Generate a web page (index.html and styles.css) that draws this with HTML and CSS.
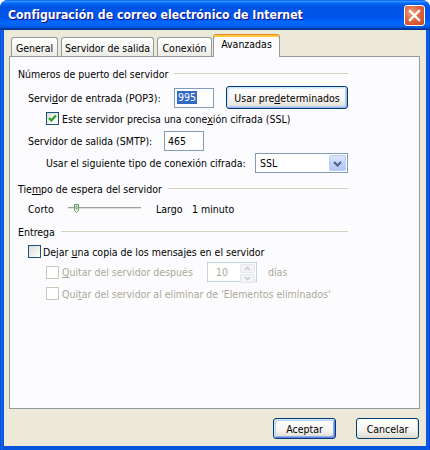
FILE: index.html
```html
<!DOCTYPE html>
<html lang="es">
<head>
<meta charset="utf-8">
<title>Configuración de correo electrónico de Internet</title>
<link rel="stylesheet" href="styles.css">
</head>
<body>
<div class="window">
  <div class="titlebar">
    <span class="title">Configuración de correo electrónico de Internet</span>
    <span class="close"><svg width="21" height="21" viewBox="0 0 21 21"><path d="M6 6 L15 15 M15 6 L6 15" stroke="#fff" stroke-width="2.4" stroke-linecap="square"/></svg></span>
  </div>
  <div class="client">
    <div class="tabs">
      <div class="tab t-general">General</div>
      <div class="tab t-salida">Servidor de salida</div>
      <div class="tab t-conex">Conexión</div>
      <div class="tab t-avanz active">Avanzadas</div>
    </div>
    <div class="panel">
      <div class="content">
        <div class="group">Números de puerto del servidor</div>

        <div class="row r-pop">
          <span class="lbl w-pop">Servi<u>d</u>or de entrada (POP3):</span>
          <span class="field w-port"><span class="selected">995</span></span>
          <span class="btn btn-hot b-pred">Usar pre<u>d</u>eterminados</span>
        </div>

        <div class="row r-ssl">
          <span class="check checked"><svg width="11" height="11" viewBox="0 0 11 11"><path d="M2 5 L4.3 7.5 L9 2.5" fill="none" stroke="#21A121" stroke-width="2"/></svg></span>
          <span class="clbl">Este servidor precisa una cone<u>x</u>ión cifrada (SSL)</span>
        </div>

        <div class="row r-smtp">
          <span class="lbl w-smtp">Servidor de salida (SMTP):</span>
          <span class="field w-port">465</span>
        </div>

        <div class="row r-tipo">
          <span class="lbl w-tipo">Usar el siguiente tipo de conexión cifrada:</span>
          <span class="field combo"><span class="combo-val">SSL</span><span class="combo-btn"><svg width="15" height="15" viewBox="0 0 15 15"><path d="M4 6 L7.5 9.5 L11 6" fill="none" stroke="#4D6185" stroke-width="2"/></svg></span></span>
        </div>

        <div class="group g2">Tie<u>m</u>po de espera del servidor</div>

        <div class="row r-slider">
          <span class="lbl w-corto">Corto</span>
          <span class="slider"><svg width="74" height="16" viewBox="0 0 74 16"><rect x="0" y="6" width="73" height="1" fill="#9D9C99"/><rect x="0" y="7" width="73" height="1" fill="#E3E2DA"/><path d="M6.5 3.5 H10.5 V9.5 L8.5 11.5 L6.5 9.5 Z" fill="#F4F4F0" stroke="#6F9B6A"/><rect x="7.5" y="4.5" width="2" height="4" fill="#21A121" opacity="0.6"/></svg></span>
          <span class="lbl w-largo">Largo</span>
          <span class="lbl">1 minuto</span>
        </div>

        <div class="group g3">Entrega</div>

        <div class="row r-copia">
          <span class="check"></span>
          <span class="clbl c2">Dejar <u>u</u>na copia de los mensajes en el servidor</span>
        </div>

        <div class="row r-despues disabled">
          <span class="check dis"></span>
          <span class="clbl w-quitar"><u>Q</u>uitar del servidor después</span>
          <span class="field spin dis-field"><span class="spin-val">10</span><span class="spin-btns"><span class="spin-b"><svg width="11" height="7" viewBox="0 0 11 7"><path d="M3 5 L5.5 2.5 L8 5" fill="none" stroke="#C3C8D6" stroke-width="1.5"/></svg></span><span class="spin-b"><svg width="11" height="7" viewBox="0 0 11 7"><path d="M3 2 L5.5 4.5 L8 2" fill="none" stroke="#C3C8D6" stroke-width="1.5"/></svg></span></span></span>
          <span class="lbl dias">días</span>
        </div>

        <div class="row r-elim disabled">
          <span class="check dis"></span>
          <span class="clbl">Qui<u>t</u>ar del servidor al eliminar de 'Elementos eliminados'</span>
        </div>
      </div>
    </div>
    <div class="footer">
      <span class="btn btn-def">Aceptar</span>
      <span class="btn">Cancelar</span>
    </div>
  </div>
</div>
</body>
</html>
```

FILE: styles.css
```css
* { box-sizing: border-box; }
html, body { margin: 0; padding: 0; }
body {
  width: 430px;
  height: 450px;
  background: #fff;
  font-family: Tahoma, "DejaVu Sans Condensed", "Liberation Sans", sans-serif;
  font-size: 10.5px;
  color: #000;
}
u { text-decoration: underline; text-underline-offset: 1px; }

.window {
  width: 430px;
  height: 450px;
  display: flex;
  flex-direction: column;
  background: linear-gradient(to right, #0831D9 0, #166AEE 1px, #0855DD 3px, #0855DD 427px, #166AEE 428px, #0831D9 430px);
  border-radius: 8px 8px 0 0;
  overflow: hidden;
}

.titlebar {
  height: 30px;
  flex: none;
  display: flex;
  align-items: center;
  padding: 0 4px 0 8px;
  background: linear-gradient(to bottom, #0058EE 0%, #3593FF 4%, #288EFF 6%, #127DFF 8%, #036FFC 10%, #0262EE 14%, #0057E5 20%, #0054E3 24%, #0055EB 56%, #005BF5 66%, #026AFE 76%, #0062EF 86%, #0052D6 92%, #0040AB 94%, #003092 100%);
}
.title {
  flex: 1;
  color: #fff;
  font-family: "Trebuchet MS", "DejaVu Sans Condensed", "Liberation Sans", sans-serif;
  font-weight: bold;
  font-size: 12.2px;
  text-shadow: 1px 1px 0 #0F1089;
  white-space: nowrap;
}
.close {
  width: 21px;
  height: 21px;
  flex: none;
  border: 1px solid #fff;
  border-radius: 3px;
  background: radial-gradient(circle at 35% 35%, #F0A384 0%, #E0643C 45%, #C8461E 100%);
  display: flex;
  align-items: center;
  justify-content: center;
  margin-right: 1px;
}
.close svg { display: block; margin: -1px; }

.client {
  flex: 1;
  margin: 0 4px 4px 4px;
  background: #ECE9D8;
  display: flex;
  flex-direction: column;
  padding: 4px 6px 7px 5px;
}

.tabs {
  height: 22px;
  flex: none;
  display: flex;
  align-items: flex-end;
  gap: 3px;
  padding-left: 2px;
  position: relative;
  z-index: 2;
}
.tab {
  height: 19px;
  border: 1px solid #919B9C;
  border-bottom: none;
  border-radius: 3px 3px 0 0;
  background: linear-gradient(#FFFFFF, #F7F7F5 50%, #ECEBE5);
  display: flex;
  align-items: center;
  justify-content: center;
  white-space: nowrap;
  padding-top: 1px;
}
.t-general { width: 47px; }
.t-salida { width: 93px; }
.t-conex { width: 55px; }
.t-avanz { width: 67px; }
.tab.active {
  height: 23px;
  margin-left: -2px;
  margin-bottom: -1px;
  background: #FCFCFE;
  border-top: 1px solid #E68B2C;
  box-shadow: inset 0 2px 0 #FFC73C;
  padding-top: 0;
  padding-bottom: 4px;
}

.panel {
  flex: 1;
  border: 1px solid #919B9C;
  background: #FCFCFE;
  padding: 9px 8px 0 8px;
  position: relative;
  z-index: 1;
}
.content { width: 330px; }

.group {
  height: 15px;
  display: flex;
  align-items: center;
  white-space: nowrap;
}
.group::after {
  content: "";
  flex: 1;
  height: 1px;
  background: #D0D0BF;
  margin-left: 6px;
}
.g2 { margin-top: 8px; }
.g3 { margin-top: 5px; }

.row {
  display: flex;
  align-items: center;
  white-space: nowrap;
}
.lbl { flex: none; }
.r-pop { height: 23px; margin-top: 5px; padding-left: 10px; }
.w-pop { width: 146px; }
.r-ssl { height: 15px; margin-top: 2px; padding-left: 28px; }
.r-smtp { height: 20px; margin-top: 5px; padding-left: 10px; }
.w-smtp { width: 136px; }
.r-tipo { height: 20px; margin-top: 2px; padding-left: 28px; }
.w-tipo { width: 209px; }
.r-slider { height: 20px; margin-top: 3px; padding-left: 10px; }
.w-corto { width: 40px; }
.slider { width: 88px; flex: none; display: flex; align-items: center; }
.slider svg { display: block; }
.w-largo { width: 36px; }
.r-copia { height: 15px; margin-top: 5px; padding-left: 10px; }
.r-despues { height: 20px; margin-top: 3px; padding-left: 28px; }
.r-elim { height: 15px; margin-top: 4px; padding-left: 28px; }
.w-quitar { width: 145px; }
.dias { margin-left: 11px; }

.disabled { color: #ACA899; }

.field {
  height: 20px;
  border: 1px solid #7F9DB9;
  background: #fff;
  display: flex;
  align-items: center;
  padding-left: 3px;
  flex: none;
}
.w-port { width: 40px; }
.selected { background: #316AC5; color: #fff; padding: 0 1px; line-height: 13px; margin-left: -1px; }

.combo { width: 93px; padding: 1px 1px 1px 4px; }
.combo-val { flex: 1; }
.combo-btn {
  width: 17px;
  height: 16px;
  border: 1px solid #B9CCF3;
  border-radius: 2px;
  background: linear-gradient(#DDE7FD, #C2D4FA 50%, #B4C8F6);
  display: flex;
  align-items: center;
  justify-content: center;
}
.combo-btn svg { display: block; }

.spin { width: 50px; padding: 1px 1px 1px 8px; }
.dis-field { border-color: #C9D4E2; }
.spin-val { flex: 1; color: #ACA899; }
.spin-btns { width: 15px; height: 16px; display: flex; flex-direction: column; gap: 1px; }
.spin-b {
  flex: 1;
  border: 1px solid #E3E6EE;
  border-radius: 2px;
  background: #F4F4F5;
  display: flex;
  align-items: center;
  justify-content: center;
}
.spin-b svg { display: block; }

.check {
  width: 13px;
  height: 13px;
  flex: none;
  border: 1px solid #1C5180;
  background: linear-gradient(135deg, #DCDCD7, #FFFFFF);
  display: flex;
  align-items: center;
  justify-content: center;
}
.check svg { display: block; }
.check.dis { border-color: #CAC8BB; background: #fff; }
.clbl { margin-left: 3px; }
.c2 { margin-left: 2px; }

.btn {
  display: inline-flex;
  align-items: center;
  justify-content: center;
  height: 21px;
  width: 63px;
  border: 1px solid #003C74;
  border-radius: 3px;
  background: linear-gradient(#FFFFFF, #F5F4F0 60%, #E3E1D8 90%, #D6D0C5);
  box-shadow: inset -1px -1px 0 #E0DDD2;
  white-space: nowrap;
  flex: none;
}
.b-pred {
  width: 122px;
  height: 23px;
  margin-left: 12px;
}
.btn-hot {
  box-shadow: inset 1px 1px 0 #CEE7FF, inset -1px -1px 0 #9DB8EE, inset 2px 2px 0 #E1ECFD, inset -2px -2px 0 #B7CCF5;
}
.btn-def {
  box-shadow: inset 1px 1px 0 #CEE7FF, inset -1px -1px 0 #6982EE, inset 2px 2px 0 #BCD4F6, inset -2px -2px 0 #89ADE4;
}

.footer {
  flex: none;
  display: flex;
  justify-content: flex-end;
  gap: 20px;
  margin-top: 9px;
  padding-right: 1px;
}
```
